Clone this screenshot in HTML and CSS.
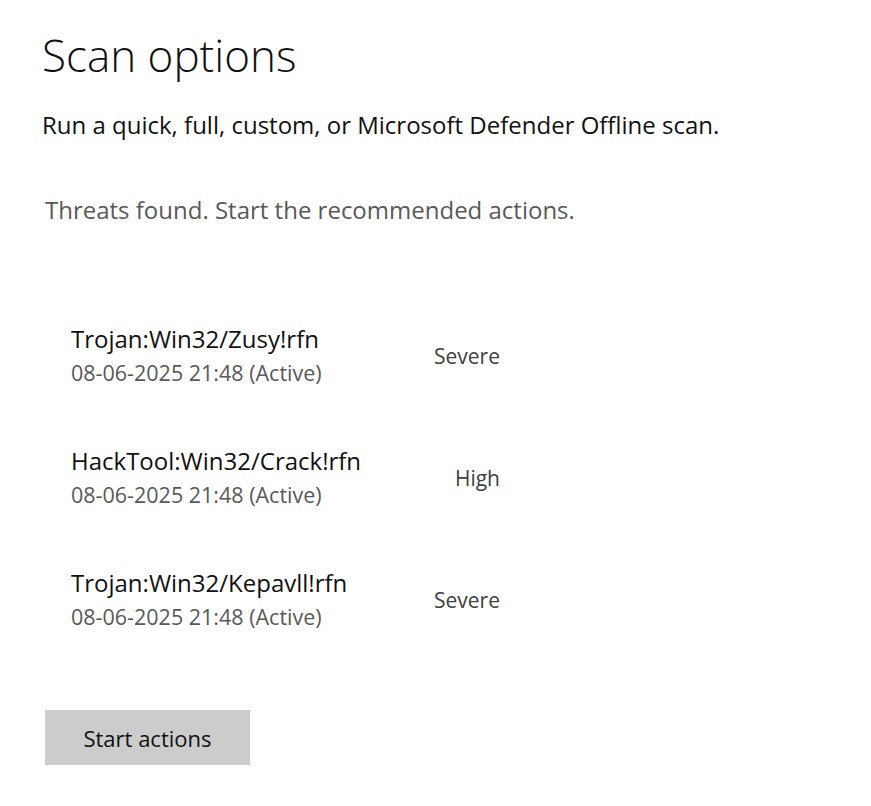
FILE: index.html
```html
<!DOCTYPE html>
<html lang="en">
<head>
    <meta charset="UTF-8">
    <meta name="viewport" content="width=device-width, initial-scale=1.0">
    <title>Scan options</title>
    <link rel="stylesheet" href="styles.css">
</head>
<body>

    <main class="page">
        <h1 class="title">Scan options</h1>
        <p class="lead">Run a quick, full, custom, or Microsoft Defender Offline scan.</p>
        <p class="status">Threats found. Start the recommended actions.</p>

        <!-- Detected threats -->
        <ul class="threats">
            <li class="threat">
                <div class="threat-info">
                    <span class="threat-name">Trojan:Win32/Zusy!rfn</span>
                    <span class="threat-date">08-06-2025 21:48 (Active)</span>
                </div>
                <span class="threat-level">Severe</span>
            </li>
            <li class="threat">
                <div class="threat-info">
                    <span class="threat-name">HackTool:Win32/Crack!rfn</span>
                    <span class="threat-date">08-06-2025 21:48 (Active)</span>
                </div>
                <span class="threat-level">High</span>
            </li>
            <li class="threat">
                <div class="threat-info">
                    <span class="threat-name">Trojan:Win32/Kepavll!rfn</span>
                    <span class="threat-date">08-06-2025 21:48 (Active)</span>
                </div>
                <span class="threat-level">Severe</span>
            </li>
        </ul>

        <button class="action">Start actions</button>
    </main>

</body>
</html>
```
FILE: styles.css
```css
body {
    font-family: 'Open Sans', sans-serif;
    background-color: #fff;
    color: #000;
    margin: 0;
    padding: 0;
}

.page {
    padding: 29px 0 0 42px;
}

.title {
    margin: 0;
    font-size: 44px;
    font-weight: 300;
    line-height: 52px;
    color: #111;
}

.lead {
    margin: 28px 0 0;
    font-size: 24px;
    line-height: 32px;
    color: #111;
}

.status {
    margin: 53px 0 0;
    padding-left: 3px;
    font-size: 24px;
    line-height: 32px;
    color: #595959;
}

.threats {
    list-style: none;
    margin: 98px 0 0;
    padding: 0 0 0 29px;
    display: flex;
    flex-direction: column;
    gap: 59px;
}

.threat {
    width: 429px;
    display: flex;
    align-items: center;
    justify-content: space-between;
}

.threat-info {
    display: flex;
    flex-direction: column;
    gap: 5px;
}

.threat-name {
    font-size: 24px;
    line-height: 30px;
    color: #111;
}

.threat-date {
    font-size: 21.5px;
    line-height: 28px;
    color: #595959;
}

.threat-level {
    font-size: 21px;
    line-height: 28px;
    color: #404040;
}

.action {
    margin: 79px 0 0 3px;
    width: 205px;
    height: 55px;
    padding: 0;
    border: none;
    background-color: #cccccc;
    font-family: inherit;
    font-size: 22px;
    color: #111;
    cursor: pointer;
}

.action:hover {
    background-color: #bfbfbf;
}
```
